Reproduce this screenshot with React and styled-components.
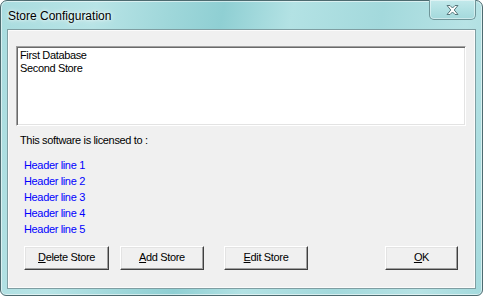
import React from 'react';
import styled, { createGlobalStyle } from 'styled-components';

const GlobalStyle = createGlobalStyle`
  html, body {
    margin: 0;
    padding: 0;
    background: #ffffff;
  }
  body {
    width: 483px;
    height: 296px;
    overflow: hidden;
  }
`;

const Window = styled.div`
  width: 483px;
  height: 296px;
  box-sizing: border-box;
  border: 1px solid #4d6b70;
  border-radius: 7px 7px 6px 6px;
  background: linear-gradient(100deg, #a9dcdf 0%, #b8e4e6 18%, #9fd7da 32%, #8fcfd3 42%, #b3e2e4 55%, #a3d9dc 72%, #b7e3e5 88%, #a4dadd 100%);
  box-shadow: inset 0 0 0 1px rgba(255, 255, 255, 0.55);
  display: flex;
  flex-direction: column;
  padding: 0 6px 6px 6px;
  font-family: "Liberation Sans", Arial, sans-serif;
`;

const TitleBar = styled.div`
  height: 28px;
  display: flex;
  align-items: flex-start;
  justify-content: space-between;
`;

const Title = styled.div`
  padding: 8px 0 0 1px;
  font-size: 12px;
  line-height: 14px;
  color: #000;
  text-shadow: 0 0 6px rgba(255, 255, 255, 0.9), 0 0 3px rgba(255, 255, 255, 0.9);
`;

const CloseButton = styled.div`
  width: 47px;
  height: 20px;
  margin-top: -1px;
  box-sizing: border-box;
  border: 1px solid #6f9599;
  border-top: none;
  border-radius: 0 0 5px 5px;
  background: linear-gradient(180deg, #c3e9eb 0%, #b2e1e3 50%, #a4d9dc 100%);
  box-shadow: inset 0 0 0 1px rgba(255, 255, 255, 0.45);
  display: flex;
  align-items: center;
  justify-content: center;
`;

const Client = styled.div`
  flex: 1;
  border: 1px solid #7f9ea2;
  background: #f0f0f0;
  box-shadow: inset 0 0 0 1px #fbfbfb;
  padding: 16px 9px 0 8px;
  display: flex;
  flex-direction: column;
  font-size: 11px;
  letter-spacing: -0.35px;
`;

const ListBox = styled.div`
  height: 80px;
  box-sizing: border-box;
  background: #ffffff;
  border: 1px solid;
  border-color: #a0a0a0 #ffffff #ffffff #a0a0a0;
  box-shadow: inset 1px 1px 0 #696969, inset -1px -1px 0 #e3e3e3;
  padding: 2px 3px;
`;

const ListItem = styled.div`
  line-height: 13px;
  color: #000;
`;

const Label = styled.div`
  margin: 8px 0 0 4px;
  line-height: 13px;
  color: #000;
`;

const Headers = styled.div`
  margin: 10px 0 0 8px;
  display: flex;
  flex-direction: column;
`;

const HeaderLine = styled.div`
  line-height: 16px;
  color: #0000ff;
`;

const ButtonRow = styled.div`
  margin: 9px 0 0 8px;
  display: flex;
  align-items: center;
`;

const Button = styled.div`
  width: ${p => p.w}px;
  height: 24px;
  margin-left: ${p => p.gap || 0}px;
  margin-right: ${p => (p.push ? 'auto' : '0')};
  box-sizing: border-box;
  background: #f0f0f0;
  border: 1px solid;
  border-color: #ffffff #404040 #404040 #ffffff;
  box-shadow: inset -1px -1px 0 #a0a0a0, inset 1px 1px 0 #e3e3e3;
  display: flex;
  align-items: center;
  justify-content: center;
  color: #000;
  line-height: 13px;
  padding-bottom: 1px;
`;

const Key = styled.span`
  text-decoration: underline;
  text-underline-offset: 1px;
`;

const CloseGlyph = () => (
  <svg width="15" height="12" viewBox="0 0 15 12">
    <path
      d="M2 1.5 L5 1.5 L7.5 4 L10 1.5 L13 1.5 L9.2 6 L13 10.5 L10 10.5 L7.5 8 L5 10.5 L2 10.5 L5.8 6 Z"
      fill="#ffffff"
      stroke="#56767a"
      strokeWidth="1"
      strokeLinejoin="round"
    />
  </svg>
);

const App = () => (
  <>
    <GlobalStyle />
    <Window>
      <TitleBar>
        <Title>Store Configuration</Title>
        <CloseButton>
          <CloseGlyph />
        </CloseButton>
      </TitleBar>
      <Client>
        <ListBox>
          <ListItem>First Database</ListItem>
          <ListItem>Second Store</ListItem>
        </ListBox>
        <Label>This software is licensed to :</Label>
        <Headers>
          {[1, 2, 3, 4, 5].map(n => (
            <HeaderLine key={n}>Header line {n}</HeaderLine>
          ))}
        </Headers>
        <ButtonRow>
          <Button w={85}>
            <Key>D</Key>elete Store
          </Button>
          <Button w={84} gap={11}>
            <Key>A</Key>dd Store
          </Button>
          <Button w={84} gap={20} push>
            <Key>E</Key>dit Store
          </Button>
          <Button w={73} style={{ marginRight: 8 }}>
            <Key>O</Key>K
          </Button>
        </ButtonRow>
      </Client>
    </Window>
  </>
);

export default App;
